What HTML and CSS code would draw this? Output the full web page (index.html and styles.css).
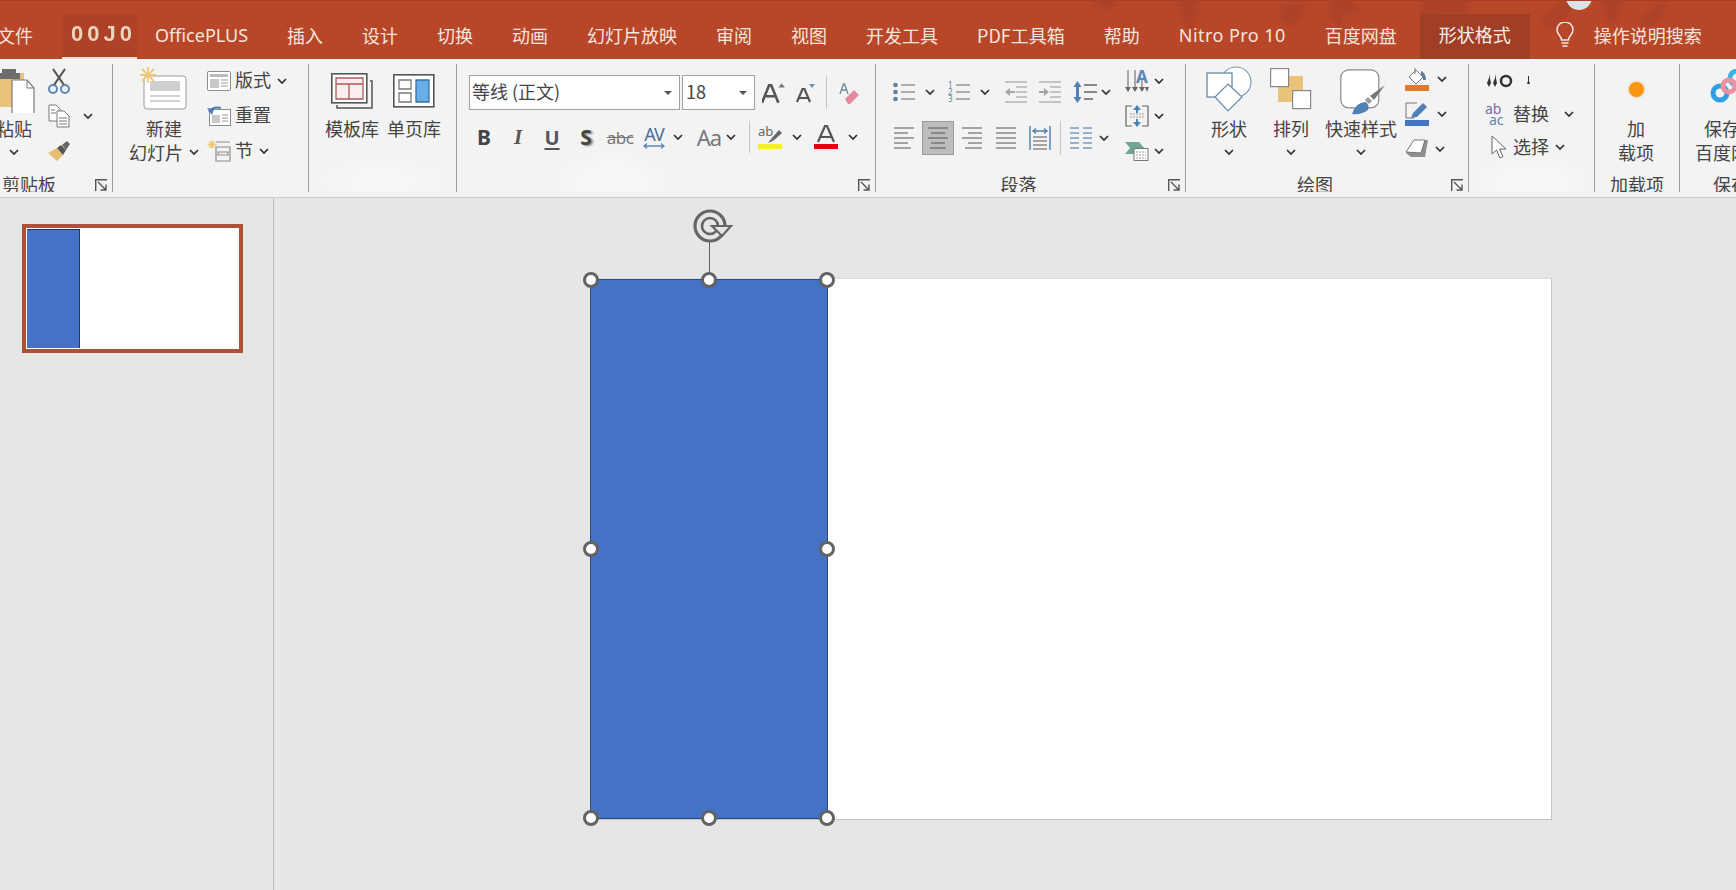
FILE: index.html
```html
<!DOCTYPE html>
<html lang="zh-CN">
<head>
<meta charset="utf-8">
<title>PowerPoint</title>
<link rel="stylesheet" href="styles.css">
</head>
<body>
<svg class="defs" width="0" height="0" aria-hidden="true">
  <symbol id="chev" viewBox="0 0 10 6"><path d="M1 1l4 4 4-4" fill="none" stroke="#2f2f2f" stroke-width="1.7"/></symbol>
  <symbol id="launch" viewBox="0 0 13 13"><path d="M.7 12V.7H12" fill="none" stroke="#555" stroke-width="1.4"/><path d="M3 3l8 8M11 5.5V11H5.5" fill="none" stroke="#555" stroke-width="1.4"/></symbol>
</svg>

<header class="titlebar">
  <svg class="art" viewBox="0 0 1736 59" width="1736" height="59" aria-hidden="true">
    <g class="art-shapes" fill="#a83f26">
      <path d="M1090 0h30l-14 12z"/>
      <path d="M1178 0h22l-4 22-8 10-6-14z"/>
      <path d="M1280 6q16-8 26 0-4 18-18 22-10-10-8-22z"/>
      <path d="M1328 0h24l10 14h-18l-4 14-10-12z"/>
      <path d="M1420 0h50v14h-28v16h-22z"/>
      <path d="M1540 24q4-14 28-24h6q-6 22-24 28z"/>
      <path d="M1600 0h24q-4 18-12 26-10-10-12-26z"/>
      <path d="M1640 20q10-14 26-20-2 22-22 30z"/>
    </g>
    <circle cx="1579" cy="-3" r="13" fill="#dfe1e8"/>
  </svg>
  <nav class="tabs">
    <span class="tab tab-file">文件</span>
    <span class="tab tab-home"><b>0</b><b>0</b><b>J</b><b>0</b></span>
    <span class="tab tab-latin">OfficePLUS</span>
    <span class="tab">插入</span>
    <span class="tab">设计</span>
    <span class="tab">切换</span>
    <span class="tab">动画</span>
    <span class="tab">幻灯片放映</span>
    <span class="tab">审阅</span>
    <span class="tab">视图</span>
    <span class="tab">开发工具</span>
    <span class="tab tab-pdf">PDF工具箱</span>
    <span class="tab">帮助</span>
    <span class="tab tab-latin tab-nitro">Nitro Pro 10</span>
    <span class="tab">百度网盘</span>
    <span class="tab tab-active">形状格式</span>
    <svg class="bulb" viewBox="0 0 20 26" width="20" height="26" aria-hidden="true"><path d="M6.5 18c0-4-4.500-5.500-4.500-10a8 8 0 0 1 16 0c0 4.500-4.500 6-4.500 10z" fill="none" stroke="#f6e6e0" stroke-width="1.500"/><path d="M6.500 21h7M7.500 24h5" stroke="#f6e6e0" stroke-width="1.500"/></svg>
    <span class="tab tab-search">操作说明搜索</span>
  </nav>
</header>

<section class="ribbon">
  <!-- 剪贴板 -->
  <div class="group g-clip">
    <div class="body">
      <div class="lg w-paste">
        <div class="lg-icon">
          <svg viewBox="0 0 44 48" width="44" height="48" aria-hidden="true"><path d="M2 8h30v34H2z" fill="#e9c27c"/><path d="M10 4h14v4h4v6H6V8h4z" fill="#6d6d6d"/><path d="M20 15h15l7 8v26H20z" fill="#fff" stroke="#7b7b7b" stroke-width="1.200"/><path d="M35 15v8h7" fill="none" stroke="#7b7b7b"/></svg>
        </div>
        <div class="line">粘贴</div>
        <div class="line"><svg class="chev"><use href="#chev"/></svg></div>
      </div>
      <div class="col col-clip">
        <div class="row">
          <span class="ico w-clipico"><svg viewBox="0 0 24 26" width="24" height="26" aria-hidden="true"><path d="M6 1l11 16M18 1L7 17" stroke="#555" stroke-width="2.200"/><circle cx="6" cy="21" r="4" fill="none" stroke="#5b85b4" stroke-width="2"/><circle cx="18" cy="21" r="4" fill="none" stroke="#5b85b4" stroke-width="2"/></svg></span>
        </div>
        <div class="row">
          <span class="ico w-clipico"><svg viewBox="0 0 22 24" width="22" height="24" aria-hidden="true"><path d="M1 1h7l4 4v12H1z" fill="#fff" stroke="#777"/><path d="M9 7h7l5 5v11H9z" fill="#fff" stroke="#777"/><path d="M3 6h4M3 9h5M11 14h8M11 17h8M11 20h8" stroke="#777"/></svg></span>
          <svg class="chev ml-copy"><use href="#chev"/></svg>
        </div>
        <div class="row">
          <span class="ico w-clipico"><svg viewBox="0 0 24 22" width="24" height="22" aria-hidden="true"><path d="M1 13l9-5 6 7-6 6z" fill="#e8bd74"/><path d="M10 8l4-3 5 5-3 5z" fill="#555"/><path d="M15 5l5-4 3 3-4 6z" fill="#666"/></svg></span>
        </div>
      </div>
    </div>
    <div class="foot"><span class="foot-text foot-clip">剪贴板</span><span class="launch"><svg width="13" height="13"><use href="#launch"/></svg></span></div>
  </div>

  <!-- 幻灯片 -->
  <div class="group g-slide">
    <div class="body">
      <div class="lg w-new">
        <div class="lg-icon">
          <svg viewBox="0 0 50 44" width="50" height="44" aria-hidden="true"><rect x="5" y="9" width="42" height="33" rx="3" fill="#fff" stroke="#9a9a9a"/><path d="M11 14h30v10H11z" fill="#cfcfcf"/><path d="M11 29h30M11 34h30" stroke="#a5a5a5"/><g stroke="#edc878" stroke-width="1.800"><path d="M9 0v16M1 8h16M3 2l12 12M15 2L3 14"/></g></svg>
        </div>
        <div class="line">新建</div>
        <div class="line">幻灯片<svg class="chev ml-6"><use href="#chev"/></svg></div>
      </div>
      <div class="col col-slide">
        <div class="row">
          <span class="ico w-24"><svg viewBox="0 0 24 20" width="24" height="20" aria-hidden="true"><rect x=".5" y=".5" width="23" height="19" rx="1" fill="#fff" stroke="#8c8c8c"/><path d="M3 3h18v3H3z" fill="#bbb"/><path d="M3 8h9v9H3z" fill="#c8c8c8"/><path d="M14 9h7M14 12h7M14 15h7" stroke="#999"/></svg></span>
          <span class="rtxt">版式</span><svg class="chev ml-6"><use href="#chev"/></svg>
        </div>
        <div class="row">
          <span class="ico w-24"><svg viewBox="0 0 24 20" width="24" height="20" aria-hidden="true"><rect x="2.500" y="3.500" width="21" height="16" fill="#fff" stroke="#8c8c8c"/><path d="M5 9h8v8H5z" fill="#c8c8c8"/><path d="M15 9h6M15 12h6M15 15h6" stroke="#999"/><path d="M2 6q4-6 12-4" fill="none" stroke="#4a7cb5" stroke-width="2"/><path d="M0 2l5 7 2-6z" fill="#4a7cb5"/></svg></span>
          <span class="rtxt">重置</span>
        </div>
        <div class="row">
          <span class="ico w-24"><svg viewBox="0 0 24 22" width="24" height="22" aria-hidden="true"><path d="M9 2h14M9 21h14V7H9zM11 12h10v3H11z" fill="none" stroke="#8c8c8c" stroke-width="1.200"/><g stroke="#edc878" stroke-width="1.300"><path d="M5 0v9M.5 4.500h9M2 1.500l6 6M8 1.500l-6 6"/></g></svg></span>
          <span class="rtxt">节</span><svg class="chev ml-6"><use href="#chev"/></svg>
        </div>
      </div>
    </div>
    <div class="foot"></div>
  </div>

  <!-- 模板库 -->
  <div class="group g-lib">
    <div class="body">
      <div class="lg w-54">
        <div class="lg-icon lg-icon-low">
          <svg viewBox="0 0 42 36" width="42" height="36" aria-hidden="true"><path d="M39 8h2v27H6v-3" fill="none" stroke="#555" stroke-width="1.500"/><rect x=".8" y=".8" width="35" height="29" fill="#fff" stroke="#555" stroke-width="1.600"/><path d="M5 5h27v21H5zM5 11h27M18 11v15" fill="#fbeeee" stroke="#b05a5a" stroke-width="1.300"/></svg>
        </div>
        <div class="line">模板库</div>
      </div>
      <div class="lg w-54">
        <div class="lg-icon lg-icon-low">
          <svg viewBox="0 0 42 34" width="42" height="34" aria-hidden="true"><rect x=".8" y=".8" width="40" height="32" fill="#fff" stroke="#555" stroke-width="1.600"/><path d="M6 6h12v9H6zM6 19h12v9H6z" fill="#fff" stroke="#777" stroke-width="1.300"/><path d="M23 6h13v22H23z" fill="#68aee8" stroke="#3d6f9f" stroke-width="1.300"/></svg>
        </div>
        <div class="line">单页库</div>
      </div>
    </div>
    <div class="foot"></div>
  </div>

  <!-- 字体 -->
  <div class="group g-font">
    <div class="body body-col">
      <div class="font-row">
        <div class="combo combo-name"><span>等线 (正文)</span><i class="caret"></i></div>
        <div class="combo combo-size"><span>18</span><i class="caret"></i></div>
        <span class="size-btn ml-7"><svg viewBox="0 0 22 20" width="24" height="22" aria-hidden="true"><path d="M0 19L6.500 3h2L15 19M3 13h9" fill="none" stroke="#555" stroke-width="2.400"/><path d="M15 5l3-4 3 4z" fill="#777"/></svg></span>
        <span class="size-btn ml-10"><svg viewBox="0 0 20 20" width="20" height="20" aria-hidden="true"><path d="M1 19L6.500 6h2L14 19M3.500 15h8" fill="none" stroke="#555" stroke-width="2.200"/><path d="M13 1h6l-3 4z" fill="#6a8fb5"/></svg></span>
        <span class="vr vr-font"></span>
        <span class="size-btn ml-12"><svg viewBox="0 0 20 22" width="20" height="22" aria-hidden="true"><path d="M1 12L4.500 2h1L9 12M2.500 8h5" fill="none" stroke="#7a8aa0" stroke-width="1.400"/><path d="M6 17l9-9 5 5-9 9H9z" fill="#e58a9c"/></svg></span>
      </div>
      <div class="fmt-row">
        <span class="t34 fmt-b">B</span>
        <span class="t34 fmt-i">I</span>
        <span class="t34 fmt-u">U</span>
        <span class="t34 fmt-s">S</span>
        <span class="t34 fmt-abc">abc</span>
        <span class="t34 fmt-av">AV<svg class="av-arrow" viewBox="0 0 22 6" width="22" height="6" aria-hidden="true"><path d="M1 3h20M4 .5L1 3l3 2.500M18 .5L21 3l-3 2.500" fill="none" stroke="#5d87b6" stroke-width="1.300"/></svg></span>
        <span class="c14"><svg class="chev"><use href="#chev"/></svg></span>
        <span class="t34 fmt-aa">Aa</span>
        <span class="c12"><svg class="chev"><use href="#chev"/></svg></span>
        <span class="vr vr-fmt"></span>
        <span class="t34 ml-3"><svg viewBox="0 0 26 24" width="26" height="24" aria-hidden="true"><path d="M14 14l8-9 3 3-9 8z" fill="#666"/><path d="M11 18l3-4 2 2z" fill="#666"/><text class="svg-ab" x="1" y="11">ab</text><path d="M1 19h24v5H1z" fill="#f5ee2b"/></svg></span>
        <span class="c14 ml-3"><svg class="chev"><use href="#chev"/></svg></span>
        <span class="t34 ml-5"><svg viewBox="0 0 26 24" width="26" height="24" aria-hidden="true"><path d="M5 17L12 1h2l7 16M8 12h10" fill="none" stroke="#555" stroke-width="2.200"/><path d="M1 19h24v5H1z" fill="#e3000f"/></svg></span>
        <span class="c14 ml-3"><svg class="chev"><use href="#chev"/></svg></span>
      </div>
    </div>
    <div class="foot"><span class="foot-text"></span><span class="launch"><svg width="13" height="13"><use href="#launch"/></svg></span></div>
  </div>

  <!-- 段落 -->
  <div class="group g-para">
    <div class="body">
      <div class="para-main">
        <div class="para-row pr1">
          <span class="t32"><svg viewBox="0 0 22 20" width="22" height="20" aria-hidden="true"><g fill="#5f7f9f"><circle cx="2.500" cy="3" r="2.300"/><circle cx="2.500" cy="10" r="2.300"/><circle cx="2.500" cy="17" r="2.300"/></g><path d="M8 3h14M8 10h14M8 17h14" stroke="#666" stroke-width="1.200"/></svg></span>
          <span class="c20"><svg class="chev"><use href="#chev"/></svg></span>
          <span class="t32 ml-3"><svg viewBox="0 0 22 22" width="22" height="22" aria-hidden="true"><text class="svg-num" x="0" y="7">1</text><text class="svg-num" x="0" y="14">2</text><text class="svg-num" x="0" y="21">3</text><path d="M8 4h14M8 11h14M8 18h14" stroke="#666" stroke-width="1.200"/></svg></span>
          <span class="c20"><svg class="chev"><use href="#chev"/></svg></span>
          <span class="t32 ml-5"><svg viewBox="0 0 24 22" width="24" height="22" aria-hidden="true"><path d="M1 1h22M12 6h11M12 11h11M12 16h11M1 21h22" stroke="#b5b5b5" stroke-width="1.300"/><path d="M1 11l5-4v3h5v2H6v3z" fill="#a5a5a5"/></svg></span>
          <span class="t32 ml-2"><svg viewBox="0 0 24 22" width="24" height="22" aria-hidden="true"><path d="M1 1h22M12 6h11M12 11h11M12 16h11M1 21h22" stroke="#b5b5b5" stroke-width="1.300"/><path d="M11 11L6 7v3H1v2h5v3z" fill="#a5a5a5"/></svg></span>
          <span class="t32 ml-3"><svg viewBox="0 0 24 24" width="24" height="24" aria-hidden="true"><path d="M4.500 1l4 6H6v10h2.500l-4 6-4-6H3V7H.5z" fill="#4f7fb4"/><path d="M11 5h13M11 12h13M11 19h9" stroke="#666" stroke-width="1.300"/></svg></span>
          <span class="c10"><svg class="chev"><use href="#chev"/></svg></span>
        </div>
        <div class="para-row pr2">
          <span class="t32"><svg viewBox="0 0 20 22" width="20" height="22" aria-hidden="true"><path d="M0 1h20M0 6h14M0 11h20M0 16h14M0 21h17" stroke="#555" stroke-width="1.200"/></svg></span>
          <span class="t32 selected"><svg viewBox="0 0 20 22" width="20" height="22" aria-hidden="true"><path d="M0 1h20M3 6h14M0 11h20M3 16h14M2 21h16" stroke="#555" stroke-width="1.200"/></svg></span>
          <span class="t32"><svg viewBox="0 0 20 22" width="20" height="22" aria-hidden="true"><path d="M0 1h20M6 6h14M0 11h20M6 16h14M3 21h17" stroke="#555" stroke-width="1.200"/></svg></span>
          <span class="t32"><svg viewBox="0 0 20 22" width="20" height="22" aria-hidden="true"><path d="M0 1h20M0 6h20M0 11h20M0 16h20M0 21h20" stroke="#555" stroke-width="1.200"/></svg></span>
          <span class="t32"><svg viewBox="0 0 22 24" width="22" height="24" aria-hidden="true"><path d="M1 0v24M21 0v24" stroke="#4f7fb4" stroke-width="1.400"/><path d="M4 5h14M7 2.500L4 5l3 2.500M15 2.500L18 5l-3 2.500" fill="none" stroke="#4f7fb4" stroke-width="1.300"/><path d="M4 11h14M4 15h14M4 19h14M4 23h14" stroke="#555" stroke-width="1.100"/></svg></span>
          <span class="vr vr-para"></span>
          <span class="t32"><svg viewBox="0 0 22 22" width="22" height="22" aria-hidden="true"><path d="M0 1h9M0 6h9M0 11h9M0 16h9M0 21h9M13 1h9M13 6h9M13 11h9M13 16h9M13 21h9" stroke="#3f6fa6" stroke-width="1.200"/></svg></span>
          <span class="c10"><svg class="chev"><use href="#chev"/></svg></span>
        </div>
      </div>
      <div class="col col-para">
        <div class="row">
          <span class="ico w-30"><svg viewBox="0 0 24 24" width="24" height="24" aria-hidden="true"><path d="M3 1v19M10 1v19M17 9v11" stroke="#777" stroke-width="1.200"/><path d="M0 18l3 5 3-5zM7 18l3 5 3-5zM14 18l3 5 3-5zM20 18l2 5 2-5z" fill="#666"/><text class="svg-a" x="11" y="14">A</text></svg></span>
          <span class="c14"><svg class="chev"><use href="#chev"/></svg></span>
        </div>
        <div class="row">
          <span class="ico w-30"><svg viewBox="0 0 24 22" width="24" height="22" aria-hidden="true"><path d="M7 1H1v20h6M17 1h6v20h-6" fill="none" stroke="#666" stroke-width="1.200"/><path d="M5 9h14M5 12h14" stroke="#999" stroke-dasharray="2 1"/><path d="M12 0l4 5h-3v3h-2V5H8zM12 22l4-5h-3v-3h-2v3H8z" fill="#4f7fb4"/></svg></span>
          <span class="c14"><svg class="chev"><use href="#chev"/></svg></span>
        </div>
        <div class="row">
          <span class="ico w-30"><svg viewBox="0 0 24 20" width="24" height="20" aria-hidden="true"><path d="M0 1h14l6 7-5 5H0l5-6z" fill="#6fa98f"/><rect x="9" y="7.500" width="14" height="12" fill="#fff" stroke="#777"/><path d="M11 11h10M11 14h10M11 17h10" stroke="#999" stroke-dasharray="2 1"/></svg></span>
          <span class="c14"><svg class="chev"><use href="#chev"/></svg></span>
        </div>
      </div>
    </div>
    <div class="foot"><span class="foot-text">段落</span><span class="launch"><svg width="13" height="13"><use href="#launch"/></svg></span></div>
  </div>

  <!-- 绘图 -->
  <div class="group g-draw">
    <div class="body">
      <div class="lg w-48">
        <div class="lg-icon">
          <svg viewBox="0 0 46 46" width="46" height="46" aria-hidden="true"><circle cx="30" cy="16" r="15" fill="#fff" stroke="#7f9bb5" stroke-width="1.200"/><rect x="1" y="7" width="25" height="24" fill="#fff" stroke="#5e7f9e" stroke-width="1.200"/><path d="M22 18l14 13-14 14L9 31z" fill="#fff" stroke="#6a8aa8" stroke-width="1.200"/></svg>
        </div>
        <div class="line">形状</div>
        <div class="line"><svg class="chev"><use href="#chev"/></svg></div>
      </div>
      <div class="lg w-48 ml-14">
        <div class="lg-icon">
          <svg viewBox="0 0 42 42" width="42" height="42" aria-hidden="true"><rect x="8" y="8" width="25" height="26" fill="#e9c27c"/><rect x=".6" y=".6" width="18" height="18" fill="#fff" stroke="#888" stroke-width="1.200"/><rect x="22.600" y="22.600" width="18" height="18" fill="#fff" stroke="#888" stroke-width="1.200"/></svg>
        </div>
        <div class="line">排列</div>
        <div class="line"><svg class="chev"><use href="#chev"/></svg></div>
      </div>
      <div class="lg w-72 ml-10">
        <div class="lg-icon lg-icon-style">
          <svg viewBox="0 0 46 46" width="46" height="46" aria-hidden="true"><rect x=".8" y=".8" width="38" height="38" rx="8" fill="#fff" stroke="#8a8a8a" stroke-width="1.200"/><path d="M45 16L34 31l-4-4z" fill="#777"/><path d="M28 28l4 4-3 3-4-4z" fill="#999"/><path d="M12 45q4-12 14-12 4 4 2 8-6 5-16 4z" fill="#4f80b8"/></svg>
        </div>
        <div class="line">快速样式</div>
        <div class="line"><svg class="chev"><use href="#chev"/></svg></div>
      </div>
      <div class="col col-draw">
        <div class="row">
          <span class="ico w-28"><svg viewBox="0 0 24 24" width="24" height="24" aria-hidden="true"><path d="M4 10l7-7 7 7-7 7z" fill="#fff" stroke="#777"/><path d="M10 1v6" stroke="#777"/><path d="M16 4q5 2 5 9h-3q0-4-2-5z" fill="#5a7fa5"/><path d="M0 18h24v6H0z" fill="#e07a2e"/></svg></span>
          <span class="c14 ml-4"><svg class="chev"><use href="#chev"/></svg></span>
        </div>
        <div class="row">
          <span class="ico w-28"><svg viewBox="0 0 24 24" width="24" height="24" aria-hidden="true"><path d="M12 1H1v15h8" fill="none" stroke="#777"/><path d="M6 16l2-5L18 1l4 4-10 10z" fill="#4f80b8"/><path d="M0 18h24v6H0z" fill="#4472c4"/></svg></span>
          <span class="c14 ml-4"><svg class="chev"><use href="#chev"/></svg></span>
        </div>
        <div class="row">
          <span class="ico w-28"><svg viewBox="0 0 24 20" width="24" height="20" aria-hidden="true"><path d="M1 14L9 1h14l-3 17H6z" fill="#8f8f8f"/><path d="M1 13L9 1h11l-4 13z" fill="#fff" stroke="#777"/></svg></span>
          <span class="c14 ml-2"><svg class="chev"><use href="#chev"/></svg></span>
        </div>
      </div>
    </div>
    <div class="foot"><span class="foot-text">绘图</span><span class="launch"><svg width="13" height="13"><use href="#launch"/></svg></span></div>
  </div>

  <!-- 编辑 -->
  <div class="group g-edit">
    <div class="body">
      <div class="col col-edit">
        <div class="row row-a">
          <svg viewBox="0 0 44 14" width="44" height="14" aria-hidden="true"><g fill="#333"><path d="M2 0v4L0 9l2 4 2-4z"/><path d="M8 0v4L6 9l2 4 2-4z"/><circle cx="19" cy="7" r="5" fill="none" stroke="#333" stroke-width="2.500"/><path d="M41 2v5l-1 3h3l-1-3V2z"/></g></svg>
        </div>
        <div class="row row-b">
          <span class="ico w-28"><span class="abac"><i>ab</i><b>ac</b></span></span>
          <span class="rtxt rtxt-0">替换</span><svg class="chev ml-15"><use href="#chev"/></svg>
        </div>
        <div class="row row-c">
          <span class="ico w-28"><svg viewBox="0 0 16 24" width="16" height="24" aria-hidden="true"><path d="M1 1v18l4.500-4 3.500 8 3-1.500-3.500-7.500H15z" fill="#fff" stroke="#666"/></svg></span>
          <span class="rtxt rtxt-0">选择</span><svg class="chev ml-6"><use href="#chev"/></svg>
        </div>
      </div>
    </div>
    <div class="foot"></div>
  </div>

  <!-- 加载项 -->
  <div class="group g-addin">
    <div class="body">
      <div class="lg w-full">
        <div class="lg-icon lg-icon-dot"><span class="dot"></span></div>
        <div class="line">加</div>
        <div class="line">载项</div>
      </div>
    </div>
    <div class="foot"><span class="foot-text">加载项</span></div>
  </div>

  <!-- 保存到百度网盘 -->
  <div class="group g-save">
    <div class="body">
      <div class="lg w-save">
        <div class="lg-icon lg-icon-save">
          <svg viewBox="0 0 44 36" width="44" height="36" aria-hidden="true"><circle cx="10" cy="24" r="7" fill="none" stroke="#2e9fe0" stroke-width="5"/><circle cx="27" cy="9" r="7" fill="none" stroke="#39b4e8" stroke-width="5"/><circle cx="19" cy="17" r="6" fill="none" stroke="#ee8fa3" stroke-width="5"/></svg>
        </div>
        <div class="line line-save">保存到</div>
        <div class="line">百度网盘</div>
      </div>
    </div>
    <div class="foot"><span class="foot-text foot-save">保存到百度网盘</span></div>
  </div>
</section>

<main class="workspace">
  <aside class="thumbs">
    <div class="thumb"><div class="thumb-slide"><div class="thumb-shape"></div></div></div>
  </aside>
  <div class="stage">
    <div class="slide">
      <div class="shape">
        <span class="rot-line"></span>
        <svg class="rot" viewBox="0 0 42 36" width="42" height="36" aria-hidden="true"><circle cx="17" cy="18" r="15" fill="none" stroke="#666" stroke-width="3.200"/><circle cx="17" cy="18" r="8" fill="none" stroke="#666" stroke-width="2.600"/><path d="M19 18h19l-9 10z" fill="#e6e6e6" stroke="#666" stroke-width="2.200"/></svg>
        <i class="h h-tl"></i><i class="h h-tc"></i><i class="h h-tr"></i>
        <i class="h h-ml"></i><i class="h h-mr"></i>
        <i class="h h-bl"></i><i class="h h-bc"></i><i class="h h-br"></i>
      </div>
    </div>
  </div>
</main>
</body>
</html>
```

FILE: styles.css
```css
* { box-sizing: border-box; }
html, body { margin: 0; height: 100%; }
body {
  width: 1736px;
  height: 890px;
  overflow: hidden;
  background: #e6e6e6;
  color: #444;
  font: 18px/24px "Noto Sans CJK SC", "Open Sans", "Liberation Sans", sans-serif;
  display: flex;
  flex-direction: column;
}
.defs { position: absolute; }
svg { display: block; flex: none; }

/* Title bar */
.titlebar {
  position: relative;
  height: 59px;
  flex: none;
  background: #b8472a;
  border-top: 1px solid #a63f25;
  overflow: hidden;
}
.art { position: absolute; left: 0; top: -1px; }
.art-shapes { opacity: .6; filter: blur(1.5px); }
.tabs {
  position: relative;
  display: flex;
  align-items: center;
  gap: 39px;
  height: 58px;
  padding-top: 9px;
  margin-left: -3px;
  white-space: nowrap;
  color: #f6e4dd;
  font-size: 18px;
}
.tab-home {
  align-self: flex-end;
  display: flex;
  align-items: center;
  gap: 4px;
  width: 75px;
  height: 45px;
  margin: 0 -21px 0 -10px;
  padding: 0 0 4px 9px;
  font-family: "Liberation Sans", sans-serif;
  background: #ae4227;
  border-bottom: 2px solid #efe0d8;
  color: #ecd3bc;
  filter: blur(.7px);
}
.tab-home b { font-size: 22px; font-weight: 700; }
.tab-latin { font-family: "Noto Sans", "Open Sans", sans-serif; }
.tab-nitro { letter-spacing: .45px; }
.tab-active {
  align-self: flex-end;
  background: #a13f26;
  height: 45px;
  line-height: 41px;
  padding: 0 19px;
  margin: 0 -19px 0 -16px;
  color: #fbeee9;
}
.bulb { margin-left: 5px; margin-right: -20px; }

/* Ribbon */
.ribbon {
  display: flex;
  flex: none;
  height: 139px;
  padding-top: 5px;
  background: #f3f3f3;
  border-bottom: 1px solid #cfcfcf;
  overflow: hidden;
}
.group {
  flex: none;
  height: 128px;
  display: flex;
  flex-direction: column;
  border-right: 1px solid #9c9c9c;
  overflow: hidden;
}
.g-clip { width: 145px; margin-left: -32px; }
.g-slide { width: 196px; }
.g-lib { width: 148px; background: radial-gradient(70px 26px at 50% 92%, #f6f6f6 50%, transparent); }
.g-font { width: 419px; background: radial-gradient(60px 34px at 37% 94%, #f7f7f7 50%, transparent); }
.g-para { width: 310px; }
.g-draw { width: 283px; }
.g-edit { width: 126px; background: radial-gradient(60px 26px at 50% 92%, #f7f7f7 50%, transparent); }
.g-addin { width: 85px; }
.g-save { width: 100px; border-right: 0; }

.body { height: 107px; flex: none; display: flex; align-items: flex-start; }
.body-col { flex-direction: column; }
.foot { display: flex; height: 21px; overflow: visible; color: #444; }
.foot-text { flex: 1; text-align: center; line-height: 24px; padding-top: 1px; white-space: nowrap; }
.foot-clip { text-align: left; padding-left: 34px; }
.foot-save { text-align: left; padding-left: 33px; }
.launch { width: 24px; flex: none; padding: 8px 0 0 7px; }

.lg { display: flex; flex-direction: column; align-items: center; flex: none; }
.lg-icon { height: 53px; display: flex; align-items: center; justify-content: center; padding-bottom: 4px; }
.lg-icon-low { padding-bottom: 2px; padding-top: 3px; }
.lg-icon-dot { padding-bottom: 3px; }
.lg-icon-style { padding: 3px 0 0 4px; }
.lg-icon-save { padding-bottom: 8px; justify-content: flex-start; align-self: flex-start; padding-left: 15px; }
.line { display: flex; align-items: center; justify-content: center; height: 24px; padding-bottom: 2px; white-space: nowrap; }

.w-paste { width: 44px; margin-left: 24px; }
.w-new { width: 76px; margin-left: 13px; }
.w-54 { width: 54px; }
.w-48 { width: 48px; }
.w-72 { width: 72px; }
.w-full { width: 100%; padding-right: 2px; }
.w-save { width: 100%; align-items: flex-start; padding-left: 15px; }
.w-save .line { justify-content: flex-start; }
.line-save { padding-left: 9px; }

.g-lib .body { padding-left: 16px; gap: 8px; }
.g-draw .body { padding-left: 19px; }

.chev { width: 10px; height: 6px; display: block; }
.col { display: flex; flex-direction: column; flex: none; }
.row { display: flex; align-items: center; height: 35px; white-space: nowrap; }
.ico { display: flex; justify-content: center; align-items: center; flex: none; }
.w-24 { width: 24px; }
.w-28 { width: 28px; }
.w-30 { width: 30px; }
.w-clipico { width: 28px; }
.rtxt { margin-left: 4px; padding-bottom: 3px; }
.rtxt-0 { margin-left: 0; }
.col-clip { margin-left: 9px; margin-top: -1px; }
.col-slide { margin-left: 5px; margin-top: -1px; }
.col-draw { margin-left: 6px; margin-top: -3px; }
.col-para { margin-left: 0; margin-top: -1px; }
.col-edit { margin-left: 16px; }
.row-a { height: 32px; padding-left: 2px; padding-top: 1px; }
.row-b { height: 36px; }
.row-c { height: 30px; }

.ml-2 { margin-left: 2px; }
.ml-3 { margin-left: 3px; }
.ml-4 { margin-left: 4px; }
.ml-5 { margin-left: 5px; }
.ml-6 { margin-left: 6px; }
.ml-7 { margin-left: 7px; }
.ml-10 { margin-left: 10px; }
.ml-12 { margin-left: 12px; }
.ml-14 { margin-left: 14px; }
.ml-15 { margin-left: 15px; }
.ml-copy { margin-left: 10px; }

/* Font group */
.font-row { display: flex; align-items: center; height: 35px; margin: 11px 0 0 12px; }
.combo {
  display: flex;
  align-items: center;
  height: 35px;
  background: #fff;
  border: 1px solid #a0a0a0;
  padding-left: 2px;
  color: #444;
  flex: none;
}
.combo span { flex: 1; padding-bottom: 3px; }
.combo-name { width: 211px; }
.combo-size { width: 73px; margin-left: 2px; padding-left: 3px; }
.caret {
  width: 0;
  height: 0;
  margin-right: 7px;
  border: 4px solid transparent;
  border-top: 4px solid #555;
  border-bottom: 0;
}
.size-btn { display: block; flex: none; }
.vr { display: block; width: 1px; flex: none; background: #c6c6c6; }
.vr-font { height: 33px; margin-left: 10px; }
.vr-fmt { height: 32px; margin-left: 11px; }
.vr-para { height: 34px; margin-left: 2px; margin-right: 2px; }

.fmt-row { display: flex; align-items: center; height: 34px; margin: 10px 0 0 10px; }
.t34, .t32 { display: flex; align-items: center; justify-content: center; flex: none; }
.t34 { width: 34px; height: 34px; position: relative; }
.t32 { width: 32px; height: 34px; }
.c10 { width: 10px; flex: none; }
.c12 { width: 12px; flex: none; }
.c14, .c20 { display: flex; justify-content: center; flex: none; }
.c14 { width: 14px; }
.c20 { width: 20px; }
.fmt-b { font: 700 21px "Noto Sans", sans-serif; color: #444; }
.fmt-i { font: italic 700 21px "Liberation Serif", serif; color: #555; }
.fmt-u { font: 700 20px "Noto Sans", sans-serif; color: #555; text-decoration: underline; text-underline-offset: 3px; }
.fmt-s { font: 700 21px "Noto Sans", sans-serif; color: #444; text-shadow: 2px 1px 2px #888; }
.fmt-abc { font: 17px "Noto Sans", sans-serif; color: #777; text-decoration: line-through; letter-spacing: -.5px; }
.fmt-av { font: 18px "Noto Sans", sans-serif; color: #4f6f96; letter-spacing: -1px; padding-bottom: 7px; }
.av-arrow { position: absolute; left: 6px; top: 23px; }
.fmt-aa { font: 22px "Noto Sans", sans-serif; color: #777; margin-left: 7px; letter-spacing: -1px; }
.svg-ab { font: 13px "Noto Sans", sans-serif; fill: #666; }
.svg-num { font: 8px "Noto Sans", sans-serif; fill: #5f7f9f; }
.svg-a { font: 700 17px "Noto Sans", sans-serif; fill: #5f88b8; }

/* Paragraph group */
.para-main { margin-left: 12px; flex: none; width: 234px; }
.para-row { display: flex; align-items: center; }
.pr1 { margin-top: 11px; height: 34px; }
.pr2 { margin-top: 12px; height: 34px; gap: 2px; }
.selected { background: #bdbdbd; border: 1px solid #9a9a9a; }

/* Editing */
.abac { display: block; font: 14px/11px "Noto Sans", sans-serif; width: 22px; margin-left: -6px; }
.abac i { font-style: normal; display: block; color: #7b6aa8; }
.abac b { font-weight: 400; display: block; color: #5c83b3; padding-left: 4px; }
.dot { display: block; width: 15px; height: 15px; border-radius: 50%; background: #f8960f; box-shadow: 0 0 3px #f8b05a; }

/* Workspace */
.workspace { flex: 1; display: flex; min-height: 0; }
.thumbs {
  width: 274px;
  flex: none;
  border-right: 1px solid #bcbcbc;
  padding: 26px 0 0 22px;
}
.thumb {
  width: 221px;
  height: 129px;
  border: 4px solid #af513a;
  background: #fff;
  padding: 1px;
}
.thumb-slide { height: 100%; }
.thumb-shape {
  width: 53px;
  height: 100%;
  background: #4472c4;
  border-right: 1px solid #1f3864;
  border-top: 1px solid #1f3864;
}
.stage { flex: 1; padding: 80px 0 0 316px; }
.slide {
  width: 962px;
  height: 542px;
  background: #fff;
  border-right: 1px solid #c4c4c4;
  border-bottom: 1px solid #c4c4c4;
  border-top: 1px solid #dcdcdc;
}
.shape {
  position: relative;
  width: 238px;
  height: 100%;
  background: #4472c4;
  border: 1px solid #2b4a7c;
}
.h {
  position: absolute;
  width: 16px;
  height: 16px;
  margin: -8px 0 0 -8px;
  border-radius: 50%;
  background: #fff;
  border: 3px solid #636363;
}
.h-tl, .h-ml, .h-bl { left: 0; }
.h-tc, .h-bc { left: 50%; }
.h-tr, .h-mr, .h-br { left: 100%; }
.h-tl, .h-tc, .h-tr { top: 0; }
.h-ml, .h-mr { top: 50%; }
.h-bl, .h-bc, .h-br { top: 100%; }
.rot-line {
  position: absolute;
  left: 50%;
  top: -38px;
  width: 1px;
  height: 38px;
  background: #636363;
}
.rot { position: absolute; left: 102px; top: -72px; }
```
